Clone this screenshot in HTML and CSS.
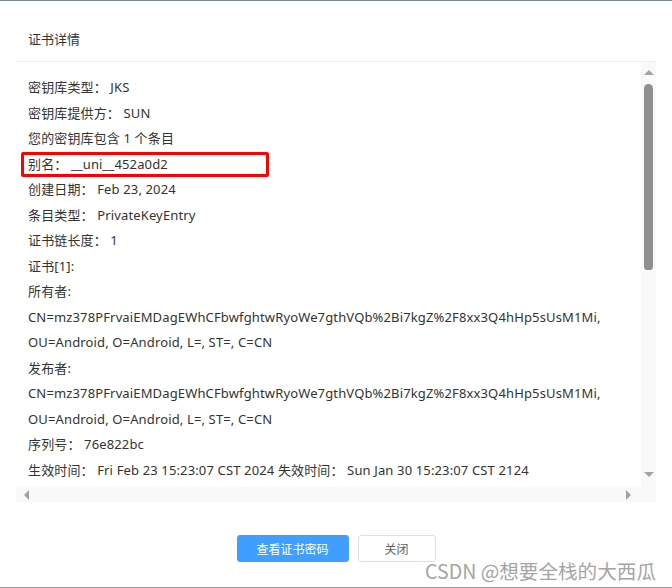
FILE: index.html
```html
<!DOCTYPE html>
<html lang="zh-CN">
<head>
<meta charset="utf-8">
<title>证书详情</title>
<link rel="stylesheet" href="styles.css">
</head>
<body>
<div class="dialog">
  <div class="header"><span class="title">证书详情</span></div>
  <div class="scroll">
    <div class="content">
      <div class="line">密钥库类型： JKS</div>
      <div class="line">密钥库提供方： SUN</div>
      <div class="line">您的密钥库包含 1 个条目</div>
      <div class="line mark">别名： __uni__452a0d2</div>
      <div class="line">创建日期： Feb 23, 2024</div>
      <div class="line">条目类型： PrivateKeyEntry</div>
      <div class="line">证书链长度： 1</div>
      <div class="line">证书[1]:</div>
      <div class="line">所有者:</div>
      <div class="line">CN=mz378PFrvaiEMDagEWhCFbwfghtwRyoWe7gthVQb%2Bi7kgZ%2F8xx3Q4hHp5sUsM1Mi,</div>
      <div class="line">OU=Android, O=Android, L=, ST=, C=CN</div>
      <div class="line">发布者:</div>
      <div class="line">CN=mz378PFrvaiEMDagEWhCFbwfghtwRyoWe7gthVQb%2Bi7kgZ%2F8xx3Q4hHp5sUsM1Mi,</div>
      <div class="line">OU=Android, O=Android, L=, ST=, C=CN</div>
      <div class="line">序列号： 76e822bc</div>
      <div class="line">生效时间： Fri Feb 23 15:23:07 CST 2024 失效时间： Sun Jan 30 15:23:07 CST 2124</div>
    </div>
    <div class="vbar">
      <span class="arrow up"></span>
      <span class="vthumb"></span>
      <span class="grow"></span>
      <span class="arrow down"></span>
    </div>
    <div class="hbar">
      <span class="arrow left"></span>
      <span class="grow"></span>
      <span class="arrow right"></span>
    </div>
    <div class="corner"></div>
  </div>
  <div class="footer">
    <button class="btn primary">查看证书密码</button>
    <button class="btn plain">关闭</button>
  </div>
</div>
<div class="watermark">CSDN @想要全栈的大西瓜</div>
</body>
</html>
```

FILE: styles.css
```css
*, *::before, *::after { box-sizing: border-box; }
html, body { margin: 0; padding: 0; }
body {
  width: 672px;
  height: 588px;
  background: #fff;
  font-family: "Noto Sans", "Noto Sans CJK SC", sans-serif;
  color: #333;
  position: relative;
  overflow: hidden;
}
.dialog {
  height: 588px;
  border-top: 1px solid #7d8b8f;
  border-bottom: 1px solid #9a9a9a;
  display: flex;
  flex-direction: column;
}
.header {
  margin: 0 16px;
  padding: 28px 12px 0;
  height: 61px;
  border-bottom: 1px solid #eeeeee;
}
.title {
  display: block;
  font-family: "Noto Sans CJK SC", sans-serif;
  font-size: 13px;
  line-height: 20px;
  color: #333;
}
.scroll {
  margin: 0 16px;
  display: grid;
  grid-template-columns: 1fr 15px;
  grid-template-rows: 425px 15px;
}
.content {
  overflow: hidden;
  padding: 13px 0 0 12px;
  font-size: 13px;
  letter-spacing: 0.14px;
}
.line {
  line-height: 25.5px;
  height: 25.5px;
  white-space: nowrap;
}
.mark { position: relative; }
.mark::after {
  content: "";
  position: absolute;
  left: -7px;
  top: 0;
  width: 248px;
  height: 25px;
  border: 3px solid #f00;
  border-radius: 2px;
}
.vbar {
  background: #f9f9f9;
  display: flex;
  flex-direction: column;
  align-items: center;
}
.hbar {
  background: #f9f9f9;
  display: flex;
  align-items: center;
}
.corner { background: #f9f9f9; }
.grow { flex: 1; }
.arrow { display: block; width: 0; height: 0; }
.arrow.up {
  margin-top: 8px;
  border-left: 5px solid transparent;
  border-right: 5px solid transparent;
  border-bottom: 5px solid #a3a3a3;
}
.arrow.down {
  margin-bottom: 10px;
  border-left: 5px solid transparent;
  border-right: 5px solid transparent;
  border-top: 5px solid #a3a3a3;
}
.arrow.left {
  margin-left: 8px;
  border-top: 5px solid transparent;
  border-bottom: 5px solid transparent;
  border-right: 5px solid #a3a3a3;
}
.arrow.right {
  margin-right: 10px;
  border-top: 5px solid transparent;
  border-bottom: 5px solid transparent;
  border-left: 5px solid #a3a3a3;
}
.vthumb {
  display: block;
  margin-top: 9px;
  width: 9px;
  height: 186px;
  background: #8f8f8f;
  border-radius: 5px 5px 4px 4px;
}
.footer {
  margin-top: 33px;
  display: flex;
  justify-content: center;
  gap: 9px;
}
.btn {
  height: 27px;
  font-family: "Noto Sans CJK SC", sans-serif;
  font-size: 12px;
  border-radius: 3px;
  padding: 0;
  cursor: pointer;
}
.btn.primary {
  width: 112px;
  background: #409eff;
  border: 1px solid #409eff;
  color: #fff;
}
.btn.plain {
  width: 78px;
  background: #fff;
  border: 1px solid #dcdfe6;
  color: #606266;
}
.watermark {
  position: absolute;
  right: 16px;
  bottom: 5px;
  font-family: "Noto Sans CJK SC", sans-serif;
  font-size: 19.6px;
  line-height: 24px;
  color: #a5a5a5;
  text-shadow: 0 0 1px #fff;
}
```
